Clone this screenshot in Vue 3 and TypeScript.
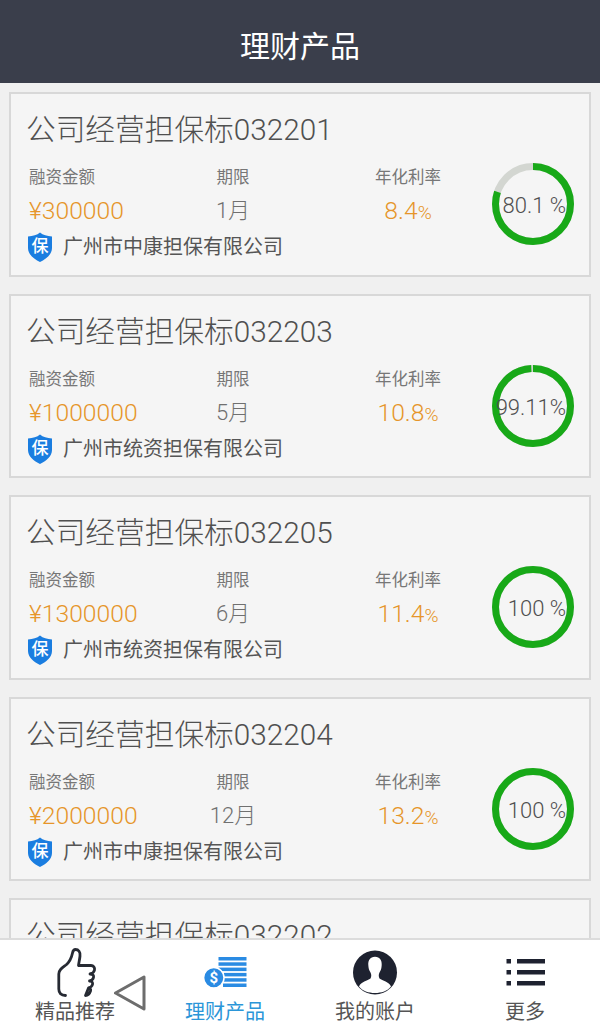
<script setup lang="ts">
interface Product {
  code: string
  amount?: string
  term?: string
  rate?: string
  progress?: number
  label?: string
  company?: string
}

const products: Product[] = [
  { code: '032201', amount: '300000', term: '1月', rate: '8.4', progress: 80.1, label: '80.1 %', company: '广州市中康担保有限公司' },
  { code: '032203', amount: '1000000', term: '5月', rate: '10.8', progress: 99.11, label: '99.11%', company: '广州市统资担保有限公司' },
  { code: '032205', amount: '1300000', term: '6月', rate: '11.4', progress: 100, label: '100 %', company: '广州市统资担保有限公司' },
  { code: '032204', amount: '2000000', term: '12月', rate: '13.2', progress: 100, label: '100 %', company: '广州市中康担保有限公司' },
  { code: '032202' },
]

const radius = 37.5
const circumference = 2 * Math.PI * radius
const dash = (p: number): string => `${(circumference * p) / 100} ${circumference}`
</script>

<template>
  <div class="page">
    <header class="header">理财产品</header>
    <main class="list">
      <article v-for="p in products" :key="p.code" class="card">
        <h2 class="title">公司经营担保标{{ p.code }}</h2>
        <div v-if="p.amount" class="body">
          <div class="info">
            <div class="metrics">
              <div class="metric first">
                <span class="label">融资金额</span>
                <span class="value">¥{{ p.amount }}</span>
              </div>
              <div class="metric">
                <span class="label">期限</span>
                <span class="value term">{{ p.term }}</span>
              </div>
              <div class="metric last">
                <span class="label">年化利率</span>
                <span class="value">{{ p.rate }}<small>%</small></span>
              </div>
            </div>
            <div class="company">
              <span class="shield">
                <svg viewBox="0 0 24 30" width="24" height="30">
                  <path d="M12 0.5 C15 3 19 4.200 24 4.500 V16 C24 22.500 18 27 12 30 C6 27 0 22.500 0 16 V4.500 C5 4.200 9 3 12 0.500 Z" fill="#1a7de0" />
                </svg>
                <b>保</b>
              </span>
              <span>{{ p.company }}</span>
            </div>
          </div>
          <div class="ring">
            <svg viewBox="0 0 82 82" width="82" height="82">
              <circle cx="41" cy="41" :r="radius" fill="none" stroke="#d3d6d1" stroke-width="7" />
              <circle
                cx="41"
                cy="41"
                :r="radius"
                fill="none"
                stroke="#18a918"
                stroke-width="7"
                :stroke-dasharray="dash(p.progress ?? 0)"
                transform="rotate(-90 41 41)"
              />
            </svg>
            <span class="ring-text">{{ p.label }}</span>
          </div>
        </div>
      </article>
    </main>
    <nav class="tabs">
      <div class="tab">
        <svg class="icon" viewBox="0 0 45 52" width="45" height="52">
          <path
            d="M12.500 49.500 C8 49.500 5.800 47 5.800 43 V28 C5.800 24 9 22 13 19 C16.500 16 18.500 12 19.500 7 C20 4.500 21 3.500 22.500 3.500 C25.500 3.500 27.500 6 27 10 C26.700 13 26 16 25.500 19.500 H38 C40.500 19.500 42 21.500 41.500 24 C41 26.500 39.500 27.500 37 28 M37 28 C40 28 41 29.500 40.500 31.500 C40 33.500 39 34.500 36.500 35 M36.500 35 C39 35 40 36.500 39.500 38.500 C39 40.500 37.500 41.500 35.500 42 M35.500 42 C37.500 42 38 43.500 37.500 45 C36.500 48 35 49.500 32.500 49.500 Z"
            fill="none"
            stroke="#262a33"
            stroke-width="2.800"
            stroke-linejoin="round"
            stroke-linecap="round"
          />
        </svg>
        <span class="tab-label">精品推荐</span>
      </div>
      <div class="tab active">
        <svg class="icon" viewBox="0 0 45 52" width="45" height="52">
          <g fill="#2a8be3">
            <rect x="15.500" y="11" width="28" height="3.500" />
            <rect x="15.500" y="16.300" width="28" height="3.500" />
            <rect x="15.500" y="21.600" width="28" height="3.500" />
            <rect x="21" y="26.900" width="22.500" height="3.500" />
            <rect x="21" y="32.200" width="22.500" height="3.500" />
            <rect x="20" y="37.500" width="23.500" height="3.500" />
            <circle cx="10.800" cy="31.700" r="10.200" stroke="#fff" stroke-width="1.500" />
          </g>
          <text x="10.800" y="37" class="dollar">$</text>
        </svg>
        <span class="tab-label">理财产品</span>
      </div>
      <div class="tab">
        <svg class="icon" viewBox="0 0 45 52" width="45" height="52">
          <circle cx="22" cy="26.500" r="22" fill="#1e2230" />
          <path
            d="M22 10.700 C17 10.700 15 14.500 15.300 19 C15.500 22.500 16 24 17.500 26.500 C18.500 28.500 18.500 30.500 17.500 32.500 C14.500 35 8 35.500 6 40.500 C9.500 45 15.500 47 22 47 C28.500 47 34.500 45 38 40.500 C36 35.500 29.500 35 26.500 32.500 C25.500 30.500 25.500 28.500 26.500 26.500 C28 24 28.500 22.500 28.700 19 C29 14.500 27 10.700 22 10.700 Z"
            fill="#fff"
          />
        </svg>
        <span class="tab-label">我的账户</span>
      </div>
      <div class="tab">
        <svg class="icon" viewBox="0 0 45 52" width="45" height="52">
          <g fill="#1e2230">
            <rect x="3.500" y="13" width="4.500" height="4.500" />
            <rect x="3.500" y="24" width="4.500" height="4.500" />
            <rect x="3.500" y="35" width="4.500" height="4.500" />
            <rect x="14" y="13" width="28" height="4.500" />
            <rect x="14" y="24" width="28" height="4.500" />
            <rect x="14" y="35" width="28" height="4.500" />
          </g>
        </svg>
        <span class="tab-label">更多</span>
      </div>
      <svg class="back" viewBox="0 0 34 38" width="34" height="38">
        <path d="M2.500 18 L31 2 V34 Z" fill="none" stroke="#6d6d6d" stroke-width="3" stroke-linejoin="round" />
      </svg>
    </nav>
  </div>
</template>

<style>
html,
body {
  margin: 0;
  background: #f0f0f0;
}
</style>

<style scoped>
.page {
  position: relative;
  display: flex;
  flex-direction: column;
  width: 600px;
  height: 1033px;
  overflow: hidden;
  background: #f0f0f0;
  color: #555;
  font-family: Roboto, "Noto Sans CJK SC", sans-serif;
}

.header {
  flex: none;
  height: 83px;
  background: #3a3e4b;
  color: #fff;
  font-size: 30px;
  line-height: 93px;
  text-align: center;
}

.list {
  flex: 1;
  min-height: 0;
  overflow: hidden;
  display: flex;
  flex-direction: column;
  gap: 17px;
  padding: 9px 9px 0;
}

.card {
  flex: none;
  box-sizing: border-box;
  height: 184.500px;
  padding: 0 15px 0 18px;
  background: #f5f5f5;
  border: 2px solid #d8d8d8;
}

.title {
  margin: 0 0 0 -3px;
  padding-top: 15px;
  font-size: 29.700px;
  font-weight: 300;
  line-height: 41px;
  color: #505050;
  white-space: nowrap;
}

.body {
  display: flex;
  align-items: flex-start;
  justify-content: space-between;
}

.metrics {
  display: grid;
  grid-template-columns: 134px 140px 176px;
  width: 450px;
  margin-top: 16px;
}

.metric {
  display: flex;
  flex-direction: column;
  align-items: center;
}

.metric.first {
  align-items: flex-start;
}

.metric.last {
  padding-left: 34px;
}

.label {
  font-size: 16.500px;
  line-height: 24px;
  color: #777;
}

.value {
  margin-top: 7px;
  font-size: 24.700px;
  font-weight: 300;
  line-height: 28px;
  color: #e6952a;
}

.value.term {
  color: #707070;
  font-size: 22px;
}

.value small {
  font-size: 19px;
}

.company {
  display: flex;
  align-items: center;
  gap: 11px;
  margin: 5px 0 0 -1px;
  font-size: 20px;
  line-height: 30px;
  color: #555;
}

.shield {
  position: relative;
  display: flex;
  width: 24px;
  height: 30px;
}

.shield b {
  position: absolute;
  inset: 0;
  color: #fff;
  font-size: 17px;
  font-weight: 500;
  line-height: 28px;
  text-align: center;
}

.ring {
  position: relative;
  flex: none;
  width: 82px;
  height: 82px;
  margin-top: 13px;
}

.ring svg {
  display: block;
}

.ring-text {
  position: absolute;
  top: 0;
  right: 8px;
  font-size: 22px;
  font-weight: 300;
  line-height: 85px;
  color: #4f4f4f;
  white-space: nowrap;
}

.tabs {
  position: relative;
  flex: none;
  display: grid;
  grid-template-columns: repeat(4, 150px);
  box-sizing: border-box;
  height: 95px;
  background: #fff;
  border-top: 2px solid #dcdcdc;
}

.tab {
  display: flex;
  flex-direction: column;
  align-items: center;
  padding-top: 6px;
}

.icon {
  display: block;
}

.tab-label {
  margin-top: 1px;
  font-size: 20px;
  line-height: 27px;
  color: #555;
}

.tab.active .tab-label {
  color: #2b96d8;
}

.dollar {
  fill: #fff;
  font-size: 15px;
  font-weight: 700;
  text-anchor: middle;
}

.back {
  position: absolute;
  left: 113px;
  top: 35px;
}
</style>
